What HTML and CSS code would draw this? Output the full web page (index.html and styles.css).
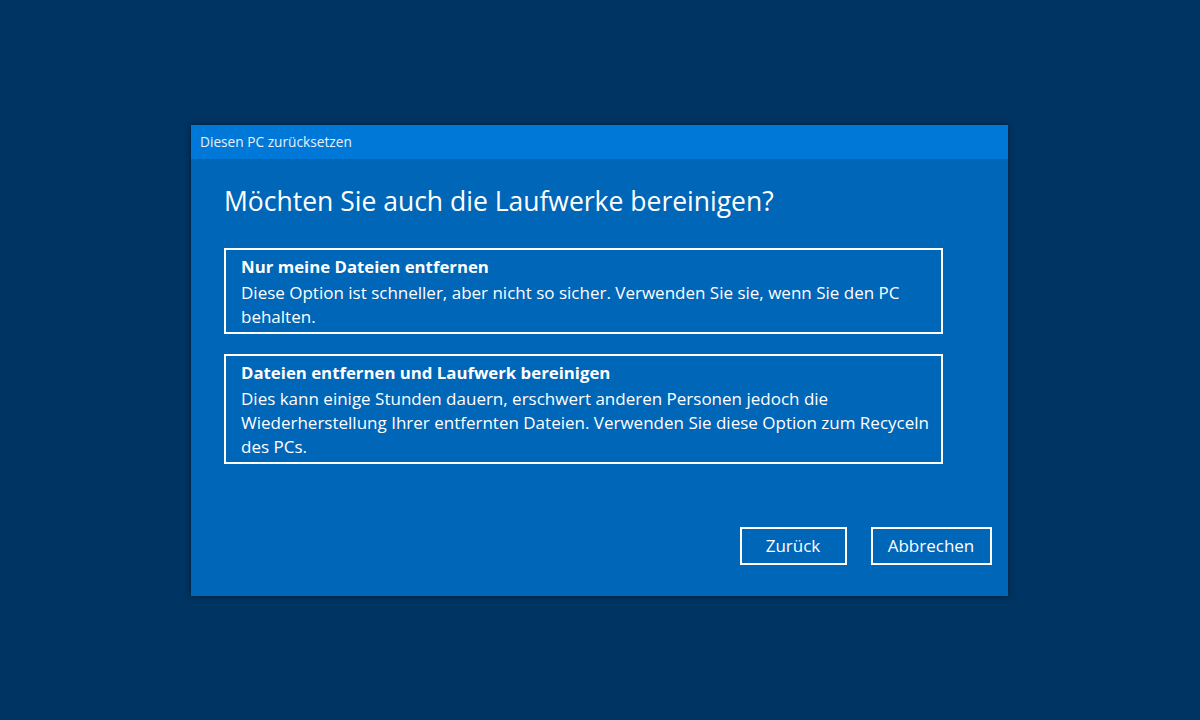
FILE: index.html
```html
<!DOCTYPE html>
<html lang="de">
<head>
<meta charset="utf-8">
<title>Diesen PC zurücksetzen</title>
<link rel="stylesheet" href="styles.css">
</head>
<body>
<div class="dialog">
  <div class="titlebar">Diesen PC zurücksetzen</div>
  <div class="content">
    <h1 class="heading">Möchten Sie auch die Laufwerke bereinigen?</h1>
    <div class="options">
      <div class="option">
        <div class="option-title">Nur meine Dateien entfernen</div>
        <div class="option-text">Diese Option ist schneller, aber nicht so sicher. Verwenden Sie sie, wenn Sie den PC behalten.</div>
      </div>
      <div class="option">
        <div class="option-title">Dateien entfernen und Laufwerk bereinigen</div>
        <div class="option-text">Dies kann einige Stunden dauern, erschwert anderen Personen jedoch die Wiederherstellung Ihrer entfernten Dateien. Verwenden Sie diese Option zum Recyceln des PCs.</div>
      </div>
    </div>
    <div class="buttons">
      <button class="btn btn-back">Zurück</button>
      <button class="btn btn-cancel">Abbrechen</button>
    </div>
  </div>
</div>
</body>
</html>
```
FILE: styles.css
```css
html, body {
  margin: 0;
  padding: 0;
}
body {
  width: 1200px;
  height: 720px;
  box-sizing: border-box;
  padding-left: 191px;
  background: #003462;
  display: flex;
  align-items: center;
  font-family: "Open Sans", "Noto Sans", sans-serif;
  color: #ffffff;
}
.dialog {
  width: 817px;
  height: 471px;
  background: #0066b8;
  box-shadow: 0 0 6px rgba(0, 0, 0, 0.45);
  display: flex;
  flex-direction: column;
}
.titlebar {
  height: 34px;
  background: #0078d7;
  font-size: 13.7px;
  line-height: 34px;
  padding-left: 9px;
  color: #e8f1fb;
}
.content {
  flex: 1;
  display: flex;
  flex-direction: column;
  padding: 0 16.5px 31px 33px;
}
.heading {
  margin: 25px 0 0 0;
  font-weight: 400;
  font-size: 26.5px;
  line-height: 34px;
}
.options {
  width: 719px;
  margin-top: 30px;
  display: flex;
  flex-direction: column;
  gap: 20px;
}
.option {
  border: 2px solid #ffffff;
  padding: 5px 5px 3px 15px;
}
.option-title {
  font-weight: 700;
  font-size: 16.8px;
  line-height: 24px;
}
.option-text {
  margin-top: 2px;
  font-size: 17px;
  line-height: 24px;
}
.buttons {
  margin-top: auto;
  display: flex;
  justify-content: flex-end;
  gap: 24px;
}
.btn {
  height: 38px;
  background: transparent;
  border: 2px solid #ffffff;
  color: #ffffff;
  font-family: "Open Sans", "Noto Sans", sans-serif;
  font-size: 17px;
  padding: 0;
}
.btn-back { width: 107px; }
.btn-cancel { width: 121px; }
```
